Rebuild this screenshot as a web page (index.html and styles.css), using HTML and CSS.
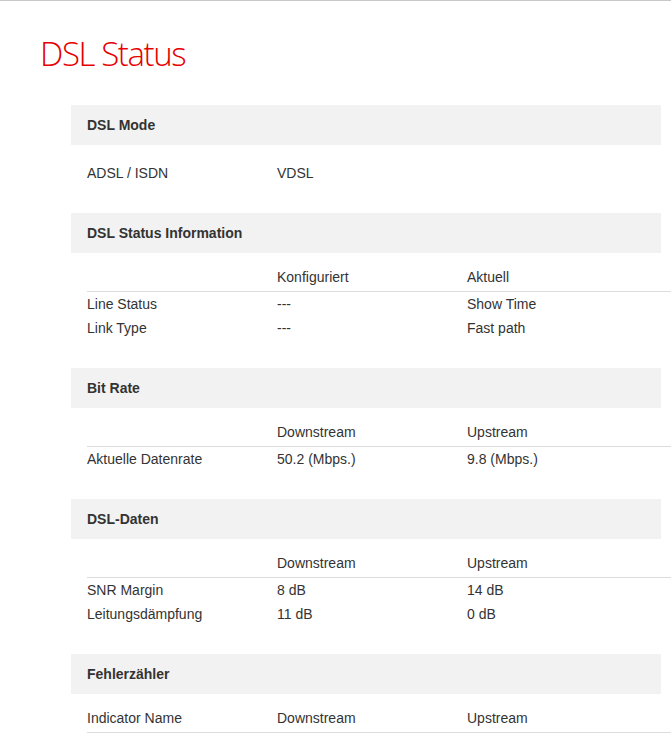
FILE: index.html
```html
<!DOCTYPE html>
<html lang="de">
<head>
    <meta charset="UTF-8">
    <meta name="viewport" content="width=device-width, initial-scale=1.0">
    <title>DSL Status</title>
    <link rel="stylesheet" href="styles.css">
</head>
<body>
    <div class="page">
        <h1 class="page-title">DSL Status</h1>

        <div class="content">
            <!-- DSL Mode -->
            <div class="section">
                <div class="section-head">DSL Mode</div>
                <table class="info-table mode-table">
                    <tr><td>ADSL / ISDN</td><td>VDSL</td><td></td></tr>
                </table>
            </div>

            <!-- Status -->
            <div class="section">
                <div class="section-head">DSL Status Information</div>
                <table class="info-table">
                    <tr class="head-row"><th></th><th>Konfiguriert</th><th>Aktuell</th></tr>
                    <tr><td>Line Status</td><td>---</td><td>Show Time</td></tr>
                    <tr><td>Link Type</td><td>---</td><td>Fast path</td></tr>
                </table>
            </div>

            <!-- Bit Rate -->
            <div class="section">
                <div class="section-head">Bit Rate</div>
                <table class="info-table">
                    <tr class="head-row"><th></th><th>Downstream</th><th>Upstream</th></tr>
                    <tr><td>Aktuelle Datenrate</td><td>50.2 (Mbps.)</td><td>9.8 (Mbps.)</td></tr>
                </table>
            </div>

            <!-- DSL-Daten -->
            <div class="section">
                <div class="section-head">DSL-Daten</div>
                <table class="info-table">
                    <tr class="head-row"><th></th><th>Downstream</th><th>Upstream</th></tr>
                    <tr><td>SNR Margin</td><td>8 dB</td><td>14 dB</td></tr>
                    <tr><td>Leitungsdämpfung</td><td>11 dB</td><td>0 dB</td></tr>
                </table>
            </div>

            <!-- Fehlerzähler -->
            <div class="section">
                <div class="section-head">Fehlerzähler</div>
                <table class="info-table">
                    <tr class="head-row"><th>Indicator Name</th><th>Downstream</th><th>Upstream</th></tr>
                </table>
            </div>
        </div>
    </div>
</body>
</html>
```

FILE: styles.css
```css
/* Basic Setup */
body {
    margin: 0;
    padding: 0;
    font-family: 'Liberation Sans', Arial, sans-serif;
    font-size: 14px;
    color: #333333;
    background-color: #ffffff;
    overflow-x: hidden;
    border-top: 1px solid #c8c8c8;
}

.page {
    padding-left: 40px;
}

.page-title {
    margin: 0;
    padding-top: 33px;
    font-family: 'Open Sans', sans-serif;
    font-weight: 300;
    font-size: 33px;
    line-height: 40px;
    color: #e60000;
    letter-spacing: -1.4px;
}

.content {
    margin-top: 31px;
    margin-left: 31px;
    width: 590px;
}

.section {
    margin-bottom: 28px;
}

.section:last-child {
    margin-bottom: 0;
}

.section-head {
    height: 40px;
    line-height: 40px;
    padding-left: 16px;
    background-color: #f2f2f2;
    font-weight: bold;
    font-size: 14px;
    color: #333;
}

.info-table {
    border-collapse: collapse;
    table-layout: fixed;
    margin-top: 12px;
    margin-left: 16px;
    width: 584px;
}

.info-table td,
.info-table th {
    padding: 0;
    text-align: left;
    font-weight: normal;
    height: 24px;
    line-height: 24px;
    vertical-align: middle;
    white-space: nowrap;
}

.info-table td:nth-child(1),
.info-table th:nth-child(1),
.info-table td:nth-child(2),
.info-table th:nth-child(2) {
    width: 190px;
}

.head-row th {
    height: 26px;
    line-height: 16px;
    padding: 4px 0 6px;
    border-bottom: 1px solid #dddddd;
    box-sizing: border-box;
}

.mode-table {
    margin-top: 16px;
}
```
